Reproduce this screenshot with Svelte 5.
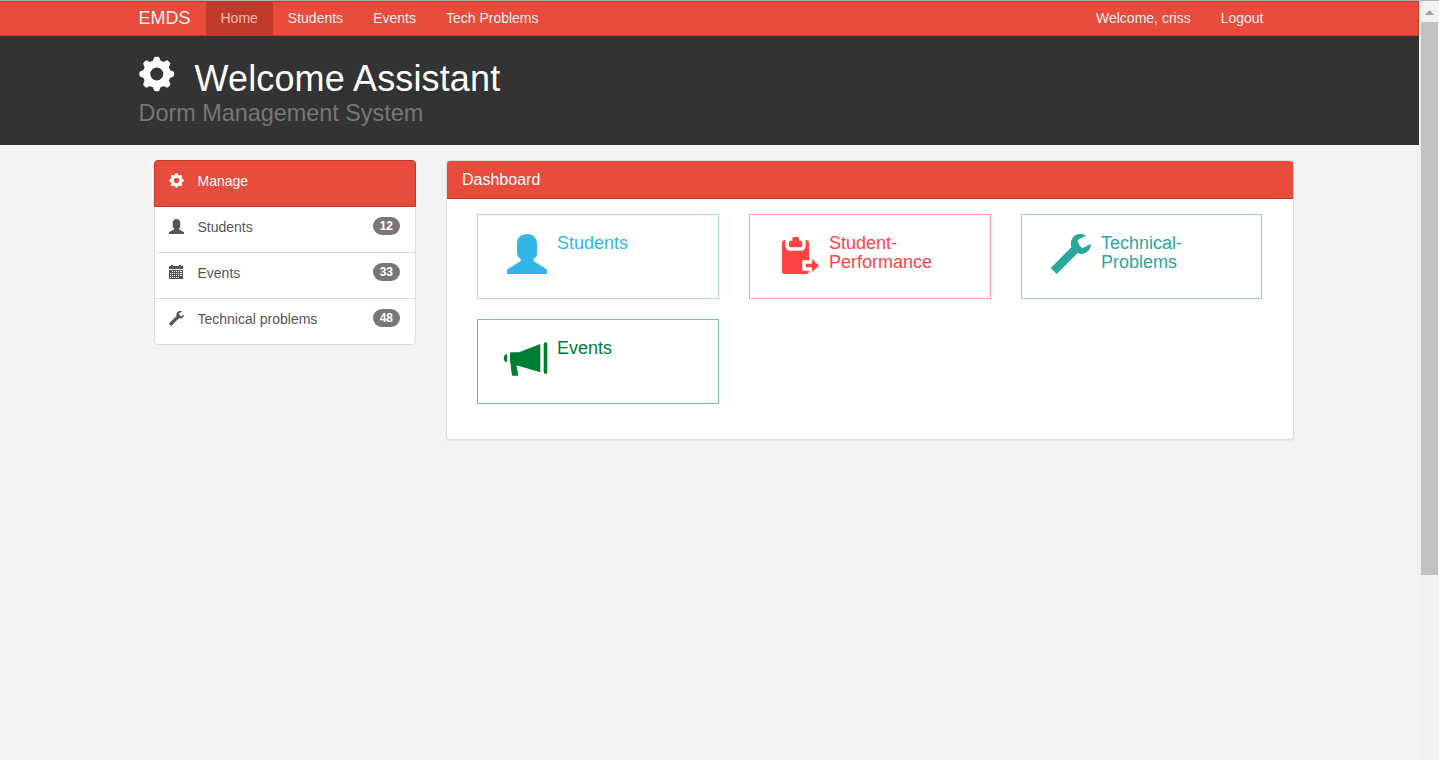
<script>
  const nav = ['Home', 'Students', 'Events', 'Tech Problems'];
  const menu = [
    { icon: 'user', label: 'Students', count: 12 },
    { icon: 'calendar', label: 'Events', count: 33 },
    { icon: 'wrench', label: 'Technical problems', count: 48 }
  ];
  const cards = [
    { icon: 'user', lines: ['Students'], kind: 'blue' },
    { icon: 'paste', lines: ['Student-', 'Performance'], kind: 'red' },
    { icon: 'wrench', lines: ['Technical-', 'Problems'], kind: 'teal' },
    { icon: 'horn', lines: ['Events'], kind: 'green' }
  ];
  const teeth = [0, 45, 90, 135, 180, 225, 270, 315];
</script>

{#snippet glyph(name)}
  {#if name === 'gear'}
    <svg viewBox="0 0 36 36">
      <circle cx="18" cy="18" r="10.3" fill="none" stroke="currentColor" stroke-width="7.4" />
      {#each teeth as a}
        <path d="M13.2 6.5 15.2 1.8Q15.4.4 16.8.4H19.2Q20.6.4 20.8 1.8L22.8 6.5Z" fill="currentColor" transform="rotate({a} 18 18)" />
      {/each}
    </svg>
  {:else if name === 'user'}
    <svg viewBox="0 0 40 40"><path fill="currentColor" d="M20 0C14 0 10 4 10 9.5V19C10 22 12 24 13.7 24.8V27L0 35.5V40H40V35.5L26.7 27V24.8C28.5 24 30 22 30 19V9.5C30 4 26 0 20 0Z" /></svg>
  {:else if name === 'wrench'}
    <svg viewBox="0 0 41 41"><path fill="currentColor" d="M0 34.5 20.8 13.5C18.8 6.5 23.5-.8 30.5 0 33 .1 34.7.9 35.9 1.9L27 6.4 29.1 11.5 32 14.7 40.8 10.2C41.2 16.8 34.5 22.5 27.2 19.6L6.2 40.7Q5.7 41.1 5.2 40.6L.1 35.4Q-.2 34.9 0 34.5Z" /></svg>
  {:else if name === 'paste'}
    <svg viewBox="0 0 40 40"><path fill="currentColor" d="M5.5 6C3.7 6.4 3 7.4 3 9V37.5Q3 40 5.5 40H27.5Q29.8 40 30 37V36.7H23.3V26.3H30V9C30 7.4 29.2 6.3 26.7 6V12Q26 16.7 22 16.7H11Q7 16.7 6.3 12V6ZM13.3 6.7V4.6Q13.4 3 15 3H18.3Q20 3 20 4.6V6.7H21.5Q23.3 6.8 23.3 8.5V11.5Q23.3 13.3 21.5 13.3H11.8Q10 13.3 10 11.5V8.5Q10 6.7 11.8 6.7ZM26.7 29.7H33V25L40 31.5 33 38V33.3H26.7Z" /></svg>
  {:else if name === 'horn'}
    <svg viewBox="0 0 45 40"><path fill="currentColor" d="M4 14V22.3C1.7 21.7.7 20.3.7 18.2S1.7 14.5 4 14ZM8 12.3H16L37.3 4V32.3L13.5 25.3 15.3 35Q15.3 35.7 14.5 35.7H9.5Q9 35.7 8.9 35L7 20V13.2Q7 12.3 8 12.3ZM40.7 4Q40.8 2.3 42.5 2.3T44.3 4V32.3Q44.3 34 42.5 34T40.7 32.3Z" /></svg>
  {:else}
    <svg viewBox="0 0 14 14"><path fill="currentColor" fill-rule="evenodd" d="M0 1.5Q0 1 .5 1H2V0H4V1H10V0H12V1H13.5Q14 1 14 1.5V4H0ZM0 5H14V13.5Q14 14 13.5 14H.5Q0 14 0 13.5ZM3 6V7H4V6ZM5 6V7H6V6ZM7 6V7H8V6ZM9 6V7H10V6ZM11 6V7H13V6ZM1 8V9H2V8ZM3 8V9H4V8ZM5 8V9H6V8ZM7 8V9H8V8ZM9 8V9H10V8ZM11 8V9H13V8ZM1 10V11H2V10ZM3 10V11H4V10ZM5 10V11H6V10ZM7 10V11H8V10ZM9 10V11H10V10ZM11 10V11H13V10ZM1 12V13H2V12ZM3 12V13H4V12ZM5 12V13H6V12ZM7 12V13H8V12ZM9 12V13H10V12Z" /></svg>
  {/if}
{/snippet}

<div class="window">
  <div class="page">
    <nav>
      <span class="brand">EMDS</span>
      {#each nav as item, i}
        <span class="link" class:active={i === 0}>{item}</span>
      {/each}
      <span class="link right">Welcome, criss</span>
      <span class="link">Logout</span>
    </nav>
    <header>
      <h1><i>{@render glyph('gear')}</i><span>Welcome Assistant</span></h1>
      <p>Dorm Management System</p>
    </header>
    <main>
      <aside>
        <div class="row head"><i>{@render glyph('gear')}</i><span>Manage</span></div>
        {#each menu as m}
          <div class="row"><i class={m.icon}>{@render glyph(m.icon)}</i><span>{m.label}</span><b>{m.count}</b></div>
        {/each}
      </aside>
      <section>
        <h3>Dashboard</h3>
        <div class="grid">
          {#each cards as c}
            <div class="card {c.kind}">
              <i class={c.icon}>{@render glyph(c.icon)}</i>
              <h4>{#each c.lines as l}<span>{l}</span>{/each}</h4>
            </div>
          {/each}
        </div>
      </section>
    </main>
  </div>
  <div class="scrollbar">
    <svg viewBox="0 0 9 5"><path d="M0 5 4.5 0 9 5Z" fill="#a3a3a3" /></svg>
    <div class="thumb"></div>
  </div>
</div>

<style>
  :global(body) { margin: 0; overflow: hidden; }
  * { box-sizing: border-box; }
  .window {
    display: flex;
    height: 760px;
    border-top: 1px solid #b1b1b1;
    background: #f3f3f3;
    font: 14px/20px "Liberation Sans", Arial, sans-serif;
    color: #555;
  }
  svg { display: block; width: 100%; height: 100%; overflow: visible; }
  i { display: block; flex: none; }
  .page { width: 1419px; }
  nav {
    display: flex;
    height: 35px;
    padding: 0 139.5px 0 123.5px;
    background: #e74c3c;
    border: 1px solid #c0392b;
    border-left: 0;
    padding-left: 124.5px;
    color: #ecf0f1;
  }
  .brand { padding: 6px 15px 0 14px; font-size: 18px; width: 81px; }
  .link { padding: 6px 15px 0; white-space: nowrap; }
  .active { background: #c0392b; color: #ffbbbc; }
  .right { margin-left: auto; }
  header { height: 109px; background: #333; padding: 20px 0 0 138.5px; color: #fff; }
  h1 { display: flex; margin: 0; font-size: 36px; font-weight: 400; line-height: 40px; height: 40px; letter-spacing: .14px; }
  h1 i { width: 35.5px; height: 36px; }
  h1 span { margin: 3px 0 0 20.5px; }
  p { margin: 4px 0 0; font-size: 23.4px; line-height: 26px; color: #777; }
  main { display: flex; align-items: flex-start; gap: 30px; padding: 15px 0 0 154px; }
  aside { width: 262px; height: 185px; background: #fff; border: 1px solid #ddd; border-radius: 4px; }
  .row { display: flex; height: 46px; padding: 10px 15px 0 14px; border-bottom: 1px solid #ddd; }
  .row:last-child { border-bottom: 0; }
  .row i { width: 15px; height: 15px; margin-top: 1.5px; }
  .row i.calendar { width: 14px; height: 14px; margin: 2px 1px 0 0; }
  .row span { margin-left: 13.5px; }
  .head { height: 47px; margin: -1px -1px 0; padding: 10px 14px 0; background: #e74c3c; border: 1px solid #c0392b; border-radius: 4px 4px 0 0; color: #fff; }
  b {
    margin-left: auto;
    height: 18px;
    padding: 3px 7px;
    border-radius: 10px;
    background: #777;
    color: #fff;
    font-size: 12px;
    line-height: 12px;
  }
  section { width: 848px; height: 280px; background: #fff; border: 1px solid #ddd; border-radius: 4px; box-shadow: 0 1px 1px rgba(0, 0, 0, .05); }
  h3 { margin: 0; height: 38px; padding: 9px 15px; background: #e74c3c; border-bottom: 1px solid #c0392b; border-radius: 3px 3px 0 0; color: #fff; font-size: 16px; line-height: 19px; font-weight: 400; }
  .grid { display: grid; grid-template-columns: 242px 242px 241px; gap: 20px 30px; padding: 15px 30px; }
  .card { display: flex; height: 85px; padding: 19px 0 0 29px; border: 1px solid; }
  .card i { width: 40px; height: 40px; }
  .card i.horn { width: 45px; margin: 1px -1px 0 -4px; }
  h4 { display: flex; flex-direction: column; margin: 0 0 0 10px; font-size: 18px; font-weight: 400; line-height: 19px; }
  .blue { color: #33b5e5; border-color: #add8e6; }
  .red { color: #f44; border-color: #ffa1a1; }
  .teal { color: #2aa79b; border-color: #94d3cd; }
  .green { color: #007e33; border-color: #80bf99; }
  .scrollbar { width: 20px; background: #f1f1f1; padding: 9px 1px 0 2px; }
  .scrollbar svg { width: 9px; height: 5px; margin: 0 0 7px 4px; }
  .thumb { height: 553px; background: #c1c1c1; }
</style>
